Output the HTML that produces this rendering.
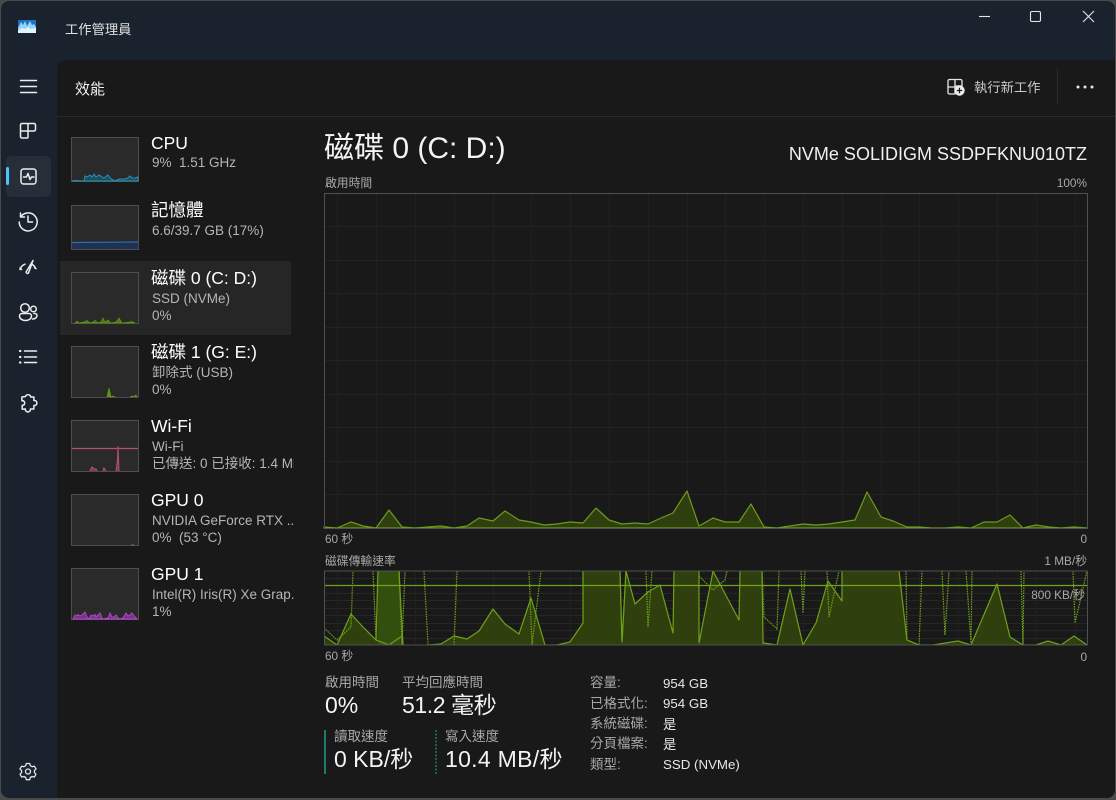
<!DOCTYPE html>
<html lang="zh-Hant"><head><meta charset="utf-8"><title>工作管理員</title>
<style>
html,body{margin:0;padding:0;width:1116px;height:800px;overflow:hidden;background:#4a4a4a}
body{position:relative;font-family:"Liberation Sans","Noto Sans CJK TC",sans-serif;color:#fff}
#win{position:absolute;left:1px;top:1px;width:1114px;height:797px;background:#1a222d;border-radius:8px;overflow:hidden}
#main{position:absolute;left:56px;top:59px;width:1058px;height:738px;background:#191919;border-top-left-radius:8px}
svg{position:absolute;left:0;top:0}
.t{position:absolute;white-space:nowrap;line-height:20px;height:20px}
.r{text-align:right}
.h{font-size:17.5px;color:#fff}
.s{font-size:13.5px;color:#b5b5b5}
.l{font-size:11.8px;color:#a8a8a8}
.k{font-size:13.5px;color:#a8a8a8}
.v{font-size:13.3px;color:#e8e8e8}
.b{font-size:23px;color:#f4f4f4}
</style></head><body>
<div id="win"><div id="main"></div></div>
<svg width="1116" height="800" viewBox="0 0 1116 800" fill="none">
 <!-- selections -->
 <rect x="6" y="156" width="45" height="41" rx="5" fill="#262e39"/>
 <rect x="6" y="167" width="3" height="18" rx="1.5" fill="#4cc2ff"/>
 <rect x="60" y="261" width="231" height="74" fill="#262626"/>
 <line x1="57" y1="116.5" x2="1115" y2="116.5" stroke="#2b2b2b"/>
 <line x1="1057.5" y1="69" x2="1057.5" y2="105" stroke="#2b2b2b"/>

 <!-- app icon -->
 <rect x="18" y="20" width="18" height="13" fill="#1f6fc4"/>
 <path d="M18 28l3-6 2 3 2-4 2 5 3-5 2 4 2-1 2 3v6H18z" fill="#8fd6f7"/>
 <path d="M18 31l4-3 3 1 3-2 3 2 5-1v5H18z" fill="#e2f4fc"/>

 <!-- title controls -->
 <g stroke="#e6e6e6" stroke-width="1.1">
  <line x1="979" y1="16.5" x2="990" y2="16.5"/>
  <rect x="1030.5" y="11.5" width="10" height="10" rx="1.5"/>
  <path d="M1083 11l11 11M1094 11l-11 11"/>
 </g>

 <!-- nav icons -->
 <g stroke="#ededed" stroke-width="1.5" stroke-linecap="round" stroke-linejoin="round">
  <path d="M20.5 80.5h16M20.5 86.5h16M20.5 92.5h16"/>
  <path d="M22 123.5h12a1.5 1.5 0 0 1 1.5 1.5v4.5a1.500 1.500 0 0 1-1.500 1.500h-6v6a1 1 0 0 1-1 1h-5a1.500 1.500 0 0 1-1.500-1.500V125a1.500 1.500 0 0 1 1.500-1.500zM28 123.500V131M20.500 131H28"/>
  <rect x="21" y="169" width="15" height="15" rx="2.500"/>
  <path d="M23.500 177h3l1.500-3.500 2 6 1.500-2.500h2.500"/>
  <path d="M21 216.500a9 9 0 1 1-1.800 5.500M20.500 213v4h4M28 216v6h4.500"/>
  <path d="M20 269.500c.8-2.600 2.600-4.500 5-5.300M31.500 264.200c2 .8 3.400 2.300 4 4.300M20 268l1.500 1.500M36 268.500l-1.500-.8M33 260.500l-4.500 12.500a1.400 1.400 0 0 1-2.400-1z"/>
  <circle cx="25" cy="308" r="4.300"/>
  <circle cx="33.500" cy="309" r="2.800"/>
  <path d="M19.500 316a2.500 2.500 0 0 1 2.500-2.500h7a2.500 2.500 0 0 1 2.500 2.500c0 2.700-2.700 4.500-6 4.500s-6-1.800-6-4.500zM34 313.500h1a2 2 0 0 1 2 2c0 2-1.800 3.500-4.500 3.500"/>
  <path d="M24.500 351h12M24.500 357h12M24.500 362.500h12"/>
  <path d="M20 351h.4M20 357h.4M20 362.500h.4" stroke-width="2.200"/>
  <path d="M25.500 396.500c.5-1.500 2-2 3.200-1.700 1.300.3 2 1.300 2 2.200h3.200v3.500c1.800-.3 3 .9 3 2.500s-1.200 2.800-3 2.500v3.500h-3.500c.2 1.800-1 3-2.500 3s-2.800-1.200-2.500-3l-3.200.2v-4c1.300.5 2.500-.8 2.500-2.200s-1.200-2.700-2.800-2.200v-3.800z"/>
 </g>
 <!-- settings gear -->
 <g stroke="#e4e4e4" stroke-width="1.3" stroke-linejoin="round">
  <circle cx="28" cy="771.500" r="2.500"/>
  <path d="M26.300 763.500h3.400l.6 2.200 1.800 1 2.200-.6 1.700 2.900-1.600 1.600v2l1.600 1.600-1.700 2.900-2.200-.6-1.800 1-.6 2.200h-3.400l-.6-2.200-1.800-1-2.200.6-1.700-2.900 1.600-1.600v-2l-1.600-1.600 1.700-2.900 2.200.6 1.800-1z"/>
 </g>
 <!-- run task icon -->
 <g stroke="#e6e6e6" stroke-width="1.3" stroke-linejoin="round">
  <path d="M949.500 79.500h11a1.500 1.500 0 0 1 1.500 1.500v5h-7v8h-5.500a1.500 1.500 0 0 1-1.500-1.500V81a1.500 1.500 0 0 1 1.500-1.500zM955 79.500V94M948 87h7"/>
 </g>
 <circle cx="959.500" cy="90.500" r="5.200" fill="#ececec"/>
 <path d="M959.500 87.800v5.400M956.800 90.500h5.400" stroke="#191919" stroke-width="1.200"/>
 <g fill="#e8e8e8"><circle cx="1078" cy="87" r="1.500"/><circle cx="1085" cy="87" r="1.500"/><circle cx="1092" cy="87" r="1.500"/></g>

 <!-- thumbs -->
 <g fill="#2a2a2a" stroke="#4d4d4d">
  <rect x="71.500" y="137.500" width="67" height="44"/>
  <rect x="71.500" y="205.500" width="67" height="44"/>
  <rect x="71.500" y="272.500" width="67" height="51"/>
  <rect x="71.500" y="346.500" width="67" height="51"/>
  <rect x="71.500" y="420.500" width="67" height="51"/>
  <rect x="71.500" y="494.500" width="67" height="51"/>
  <rect x="71.500" y="568.500" width="67" height="51"/>
 </g>
 <path d="M72 181L74 180.500 84 181 85 176 87 177 90 175 92 177 94 174 96 177 99 175 102 177 104 178 108 175 110 178 113 180 115 181 117 180 119 179 125 179 128 178 130 176 132 178 135 178 138 177V181z" fill="#1d4f63" stroke="#2b8fb0"/>
 <rect x="72" y="242.500" width="66" height="6.500" fill="#1f3252"/>
 <line x1="72" y1="242.500" x2="138" y2="242" stroke="#2f6db8" stroke-width="1.200"/>
 <path d="M75 323L77 321 79 323 84 322 87 320.500 90 323 93 322 95 320.500 98 323 101 322 103 318 105 322 108 320 111 323 116 322 119 318 122 323 130 322 132 321.500 135 323z" fill="#4f7a12" stroke="#5e9416" stroke-width=".7"/>
 <path d="M107 397L109 388 111 397 113 396 115 397M130 397L132 396 134 396.500 136 395 137 397" fill="#5e9416" stroke="#5e9416" stroke-width=".8"/>
 <line x1="72" y1="448.500" x2="138" y2="448.500" stroke="#b84e78" stroke-width="1.200"/>
 <path d="M90 471L92 467 94 469 96 469 97 471M103 471L104 468 106 471M116 471L117.500 460 118 446 119 471" fill="#7a3a58" stroke="#b84e78"/>
 <line x1="131" y1="545" x2="134" y2="545" stroke="#a04ab0"/>
 <path d="M73 619L75 615 77 616 78 614.500 80 616 82 615 85 612 87 617 89 619 91 615 93 616 95 614.500 96 617 98 615 100 613 102 618 103 619 108 618 110 613 112 617 114 617 116 615 118 618 120 619 123 618 126 613 128 616 130 615 132 613 134 616 136 618 137 619z" fill="#7b2f8d" stroke="#b34ac9" stroke-width=".9"/>

 <!-- main graph grid -->
 <g stroke="#232323">
  <path d="M325 226.500H1087M325 260.500H1087M325 293.500H1087M325 327.500H1087M325 360.500H1087M325 394.500H1087M325 427.500H1087M325 461.500H1087M325 494.500H1087"/>
 </g>
 <g stroke="#202020">
  <path d="M337.500 193V528M376.500 193V528M415.500 193V528M454.500 193V528M493.500 193V528M531.500 193V528M570.500 193V528M609.500 193V528M648.500 193V528M687.500 193V528M725.500 193V528M764.500 193V528M803.500 193V528M842.500 193V528M881.500 193V528M919.500 193V528M958.500 193V528M997.500 193V528M1036.500 193V528M1075.500 193V528"/>
 </g>
 <path d="M324 528V527L337 528 351 522 363 526 376 528 389 510 402 527 415 528 428 527 441 526 454 528 467 526 479 518 493 521 505 511 519 520 531 522 544 525 557 524 570 522 583 523 596 508 609 520 622 524 635 523 648 524 661 518 673 513 687 491 699 526 713 518 725 522 739 522 751 504 764 527 777 528 790 526 803 524 816 525 829 524 842 522 855 520 867 492 881 517 893 521 907 527 919 527 932 528 945 528 958 527 971 528 984 522 997 522 1010 515 1023 528 1036 525 1049 527 1061 528 1074 527 1087 528z" fill="#2f3f0f" stroke="#6d9a1c" stroke-width="1.200" stroke-linejoin="round"/>
 <rect x="324.500" y="193.500" width="763" height="335" stroke="#505050"/>

 <!-- lower graph grid -->
 <g stroke="#262626">
  <path d="M325 578.500H1087M325 593.500H1087M325 600.500H1087M325 608.500H1087M325 615.500H1087M325 623.500H1087M325 630.500H1087M325 638.500H1087"/>
 </g>
 <g stroke="#212121">
  <path d="M337.500 571V645M376.500 571V645M415.500 571V645M454.500 571V645M493.500 571V645M531.500 571V645M570.500 571V645M609.500 571V645M648.500 571V645M687.500 571V645M725.500 571V645M764.500 571V645M803.500 571V645M842.500 571V645M881.500 571V645M919.500 571V645M958.500 571V645M997.500 571V645M1036.500 571V645M1075.500 571V645"/>
 </g>
 <clipPath id="c"><rect x="324" y="571" width="764" height="74"/></clipPath>
 <g clip-path="url(#c)">
  <path d="M324 645V636L337 645 351 614 363 627 376 640 378 571H399L402 636 403 645zM428 645L441 644 454 636 467 639 479 631 493 609 505 624 519 634 531 598 545 645 557 645 570 642 583 623 583 571H620L622 642 626 571 635 604 648 592 660 585 673 633 674 571H699L699 643 713 571 739 620 740 571H762L763 643 777 645 790 589 803 645 816 623 828 581 842 601 842 571H899L907 640 919 645 933 645 958 641 971 645 997 584 1010 637 1023 645 1036 645 1048 641 1061 645 1074 636 1087 645z" fill="#2f400e"/>
  <rect x="378" y="571" width="22" height="74" fill="#334f0e"/>
  <path d="M324 636L337 645 351 614 363 627 376 640 389 645 402 636 403 645M376 640L378 571M399 571L403 645M428 645L441 644 454 636 467 639 479 631 493 609 505 624 519 634 531 598 545 645 557 645 570 642 583 623 583 571M620 571L622 642 626 571 635 604 648 592 660 585 673 633 674 571M699 571L699 643 713 571 739 620 740 571M762 571L763 643 777 645 790 589 803 645 816 623 828 581 842 601 842 571M899 571L907 640 919 645 933 645 958 641 971 645 997 584 1010 637 1023 645 1036 645 1048 641 1061 645 1074 636 1087 645" stroke="#6fa01a" stroke-width="1.200" stroke-linejoin="round"/>
  <path d="M324 628L337 640 351 627 353 571M373 571L376 640M399 571L402 645 405 571M424 571L428 645M454 645L457 571M529 571L532 645 541 571M620 571L622 642 626 571M646 571L648 627 652 571M699 576L713 590 725 580 727 571M762 571L764 617 777 629 779 571M801 571L803 613 805 571M827 571L829 617 839 571M906 571L907 640 919 645 922 571M942 571L945 635 949 571M966 571L971 643 972 571M1021 571L1023 645 1024 571M1073 571L1075 623 1087 571" stroke="#6fa01a" stroke-width="1.200" stroke-dasharray="1.500 1"/>
 </g>
 <line x1="324" y1="585.500" x2="1087" y2="585.500" stroke="#72a31c" stroke-width="1.200"/>
 <rect x="324.500" y="571" width="763" height="74" stroke="#505050"/>

 <!-- stat bars -->
 <line x1="325" y1="730" x2="325" y2="774" stroke="#1f7a6c" stroke-width="2"/>
 <line x1="436" y1="730" x2="436" y2="774" stroke="#1f7a6c" stroke-width="1.500" stroke-dasharray="2 1.500"/>
</svg>

<div class="t" style="left:65px;top:20px;font-size:13.3px;color:#e0e0e0">工作管理員</div>
<div class="t" style="left:75px;top:80px;font-size:15px;color:#f0f0f0">效能</div>
<div class="t" style="left:974px;top:78px;font-size:13.3px;color:#c8c8c8">執行新工作</div>

<div class="t h" style="left:151px;top:133px">CPU</div>
<div class="t s" style="left:152px;top:153px">9%&nbsp; 1.51 GHz</div>
<div class="t h" style="left:151px;top:200px">記憶體</div>
<div class="t s" style="left:152px;top:221px">6.6/39.7 GB (17%)</div>
<div class="t h" style="left:151px;top:268px">磁碟 0 (C: D:)</div>
<div class="t s" style="left:152px;top:289px">SSD (NVMe)</div>
<div class="t s" style="left:152px;top:306px">0%</div>
<div class="t h" style="left:151px;top:342px">磁碟 1 (G: E:)</div>
<div class="t s" style="left:152px;top:363px">卸除式 (USB)</div>
<div class="t s" style="left:152px;top:380px">0%</div>
<div class="t h" style="left:151px;top:416px">Wi-Fi</div>
<div class="t s" style="left:152px;top:437px">Wi-Fi</div>
<div class="t s" style="left:152px;top:454px;width:142px;overflow:hidden">已傳送: 0 已接收: 1.4 Mbps</div>
<div class="t h" style="left:151px;top:490px">GPU 0</div>
<div class="t s" style="left:152px;top:511px;width:142px;overflow:hidden">NVIDIA GeForce RTX ..</div>
<div class="t s" style="left:152px;top:528px">0%&nbsp; (53 °C)</div>
<div class="t h" style="left:151px;top:564px">GPU 1</div>
<div class="t s" style="left:152px;top:585px;width:142px;overflow:hidden">Intel(R) Iris(R) Xe Grap.</div>
<div class="t s" style="left:152px;top:602px">1%</div>

<div class="t" style="left:324px;top:139px;font-size:30px;line-height:20px;color:#f4f4f4">磁碟 0 (C: D:)</div>
<div class="t r" style="right:29px;top:144px;font-size:18px;color:#f0f0f0">NVMe SOLIDIGM SSDPFKNU010TZ</div>

<div class="t l" style="left:325px;top:173px">啟用時間</div>
<div class="t l r" style="right:29px;top:173px">100%</div>
<div class="t l" style="left:325px;top:529px">60 秒</div>
<div class="t l r" style="right:29px;top:529px">0</div>
<div class="t l" style="left:325px;top:551px">磁碟傳輸速率</div>
<div class="t l r" style="right:29px;top:551px">1 MB/秒</div>
<div class="t l r" style="right:31px;top:585px">800 KB/秒</div>
<div class="t l" style="left:325px;top:646px">60 秒</div>
<div class="t l r" style="right:29px;top:647px">0</div>

<div class="t k" style="left:325px;top:673px">啟用時間</div>
<div class="t b" style="left:325px;top:695px">0%</div>
<div class="t k" style="left:402px;top:673px">平均回應時間</div>
<div class="t b" style="left:402px;top:695px;letter-spacing:-.4px">51.2 毫秒</div>
<div class="t k" style="left:334px;top:727px">讀取速度</div>
<div class="t b" style="left:334px;top:749px">0 KB/秒</div>
<div class="t k" style="left:445px;top:727px">寫入速度</div>
<div class="t b" style="left:445px;top:749px;letter-spacing:.3px">10.4 MB/秒</div>

<div class="t k" style="left:590px;top:673px">容量:</div><div class="t v" style="left:663px;top:674px">954 GB</div>
<div class="t k" style="left:590px;top:694px">已格式化:</div><div class="t v" style="left:663px;top:694px">954 GB</div>
<div class="t k" style="left:590px;top:714px">系統磁碟:</div><div class="t v" style="left:663px;top:715px">是</div>
<div class="t k" style="left:590px;top:734px">分頁檔案:</div><div class="t v" style="left:663px;top:735px">是</div>
<div class="t k" style="left:590px;top:755px">類型:</div><div class="t v" style="left:663px;top:755px">SSD (NVMe)</div>
</body></html>
